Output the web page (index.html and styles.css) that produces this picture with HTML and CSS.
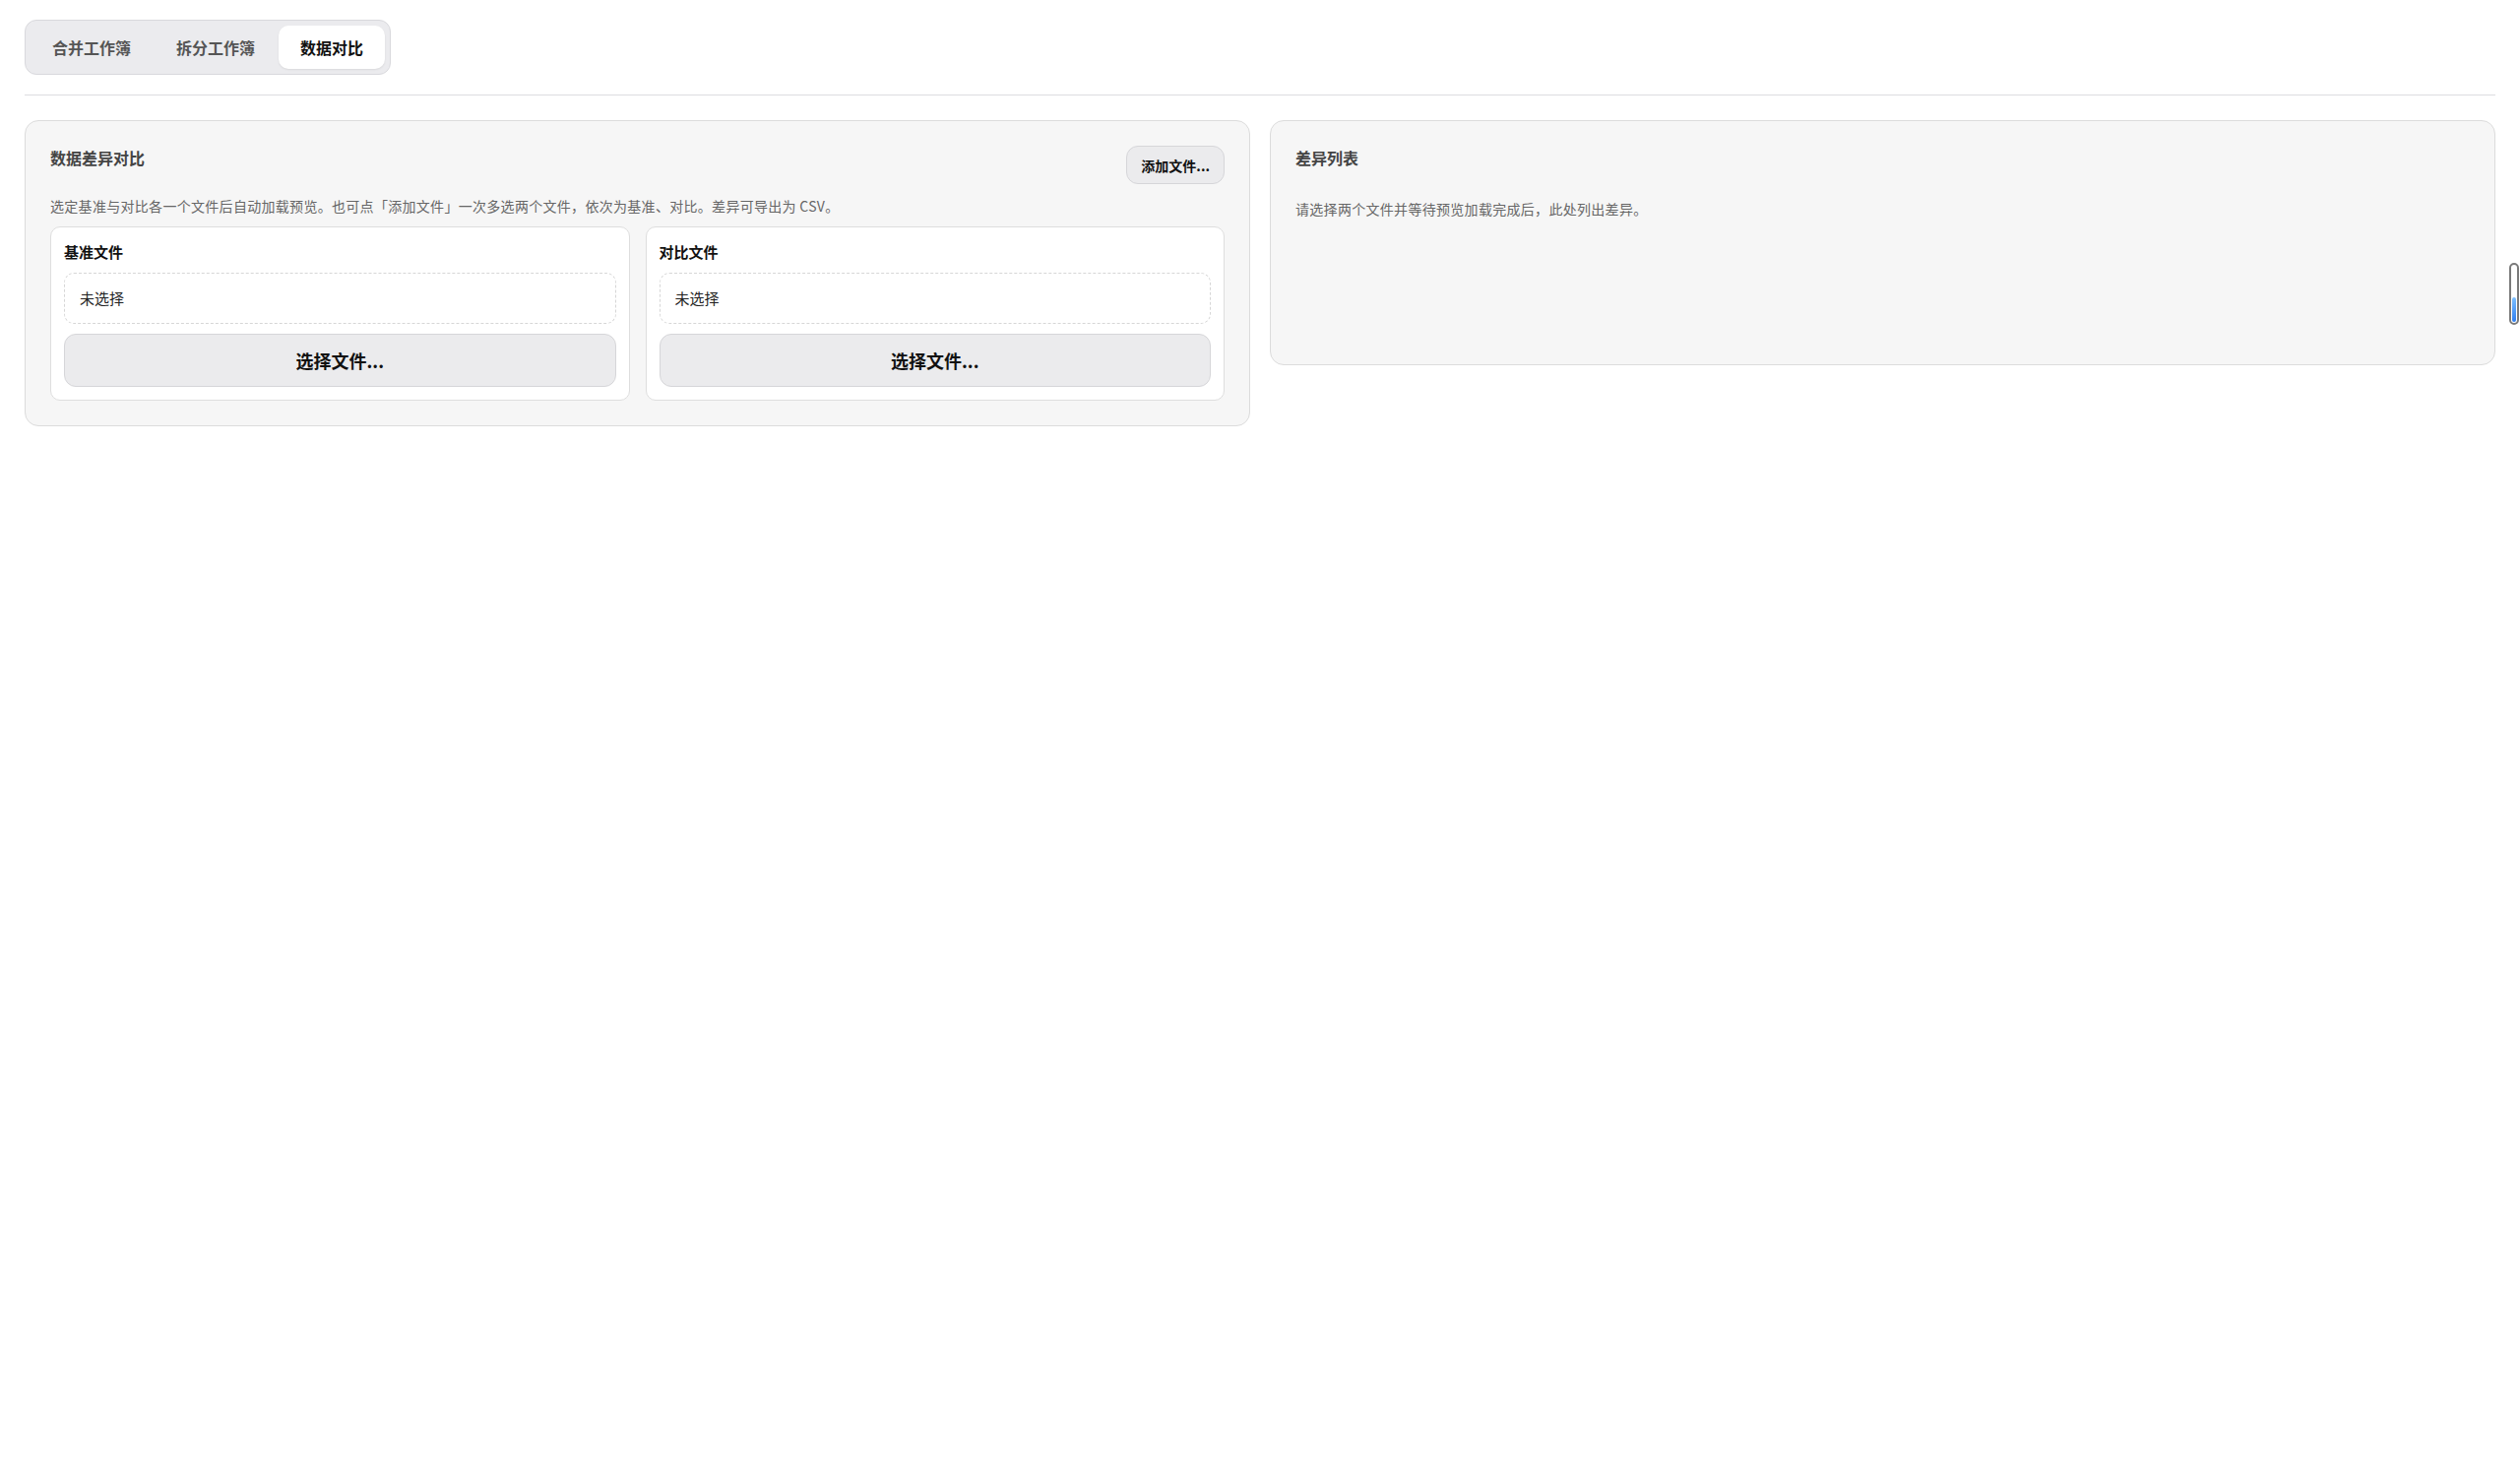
FILE: index.html
```html
<!DOCTYPE html>
<html lang="zh-CN">
<head>
    <meta charset="UTF-8">
    <meta name="viewport" content="width=device-width, initial-scale=1.0">
    <title>数据对比</title>
    <link rel="stylesheet" href="styles.css">
</head>
<body>
    <div class="app">
        <!-- 顶部功能切换 -->
        <nav class="tabs">
            <button class="tab">合并工作簿</button>
            <button class="tab">拆分工作簿</button>
            <button class="tab active">数据对比</button>
        </nav>

        <hr class="divider">

        <main class="compare">
            <!-- 左侧：选择文件 -->
            <section class="panel">
                <div class="panel-head">
                    <h2 class="panel-title">数据差异对比</h2>
                    <button class="btn btn-small" id="addFiles">添加文件...</button>
                </div>
                <p class="hint hint-top">选定基准与对比各一个文件后自动加载预览。也可点「添加文件」一次多选两个文件，依次为基准、对比。差异可导出为 CSV。</p>

                <div class="file-grid">
                    <div class="file-card">
                        <div class="file-label">基准文件</div>
                        <div class="file-name">未选择</div>
                        <button class="btn btn-pick">选择文件...</button>
                    </div>
                    <div class="file-card">
                        <div class="file-label">对比文件</div>
                        <div class="file-name">未选择</div>
                        <button class="btn btn-pick">选择文件...</button>
                    </div>
                </div>
            </section>

            <!-- 右侧：差异结果 -->
            <section class="panel">
                <div class="panel-head">
                    <h2 class="panel-title">差异列表</h2>
                </div>
                <div class="diff-list">
                    <p class="hint">请选择两个文件并等待预览加载完成后，此处列出差异。</p>
                </div>
            </section>
        </main>
    </div>

    <div class="scroll-pill"><span></span></div>
</body>
</html>
```

FILE: styles.css
```css
* {
    margin: 0;
    padding: 0;
    box-sizing: border-box;
}

body {
    font-family: "Noto Sans CJK SC", "Noto Sans", sans-serif;
    background: #fff;
    color: #111;
}

.app {
    padding: 20px 25px;
}

/* 顶部标签 */
.tabs {
    display: inline-flex;
    gap: 2px;
    padding: 5px;
    background: #ebebee;
    border: 1px solid #d9d9dd;
    border-radius: 12px;
}

.tab {
    height: 44px;
    padding: 0 22px;
    border: none;
    border-radius: 10px;
    background: transparent;
    font-family: inherit;
    font-size: 16px;
    font-weight: 600;
    line-height: 44px;
    color: #555;
    cursor: pointer;
}

.tab.active {
    background: #fff;
    color: #111;
    box-shadow: 0 1px 2px rgba(0,0,0,0.08);
}

.divider {
    border: none;
    border-top: 1px solid #dcdce0;
    margin: 20px 0 25px;
}

/* 主体两栏 */
.compare {
    display: grid;
    grid-template-columns: 1fr 1fr;
    gap: 20px;
    align-items: start;
}

.panel {
    background: #f6f6f6;
    border: 1px solid #dcdcdc;
    border-radius: 14px;
    padding: 25px;
}

.panel-head {
    display: flex;
    justify-content: space-between;
    align-items: flex-start;
}

.panel-title {
    font-size: 16px;
    font-weight: 600;
    line-height: 24px;
    color: #444;
}

.hint {
    font-size: 14px;
    line-height: 20px;
    letter-spacing: 0.3px;
    color: #666;
}

.hint-top {
    margin: 12px 0 11px;
}

.btn {
    font-family: inherit;
    font-weight: 700;
    color: #111;
    background: #ebebed;
    border: 1px solid #d6d6d9;
    border-radius: 12px;
    cursor: pointer;
}

.btn-small {
    height: 39px;
    padding: 0 14px;
    font-size: 14px;
}

/* 文件卡片 */
.file-grid {
    display: grid;
    grid-template-columns: 1fr 1fr;
    gap: 16px;
}

.file-card {
    background: #fff;
    border: 1px solid #dedede;
    border-radius: 10px;
    padding: 13px;
}

.file-label {
    font-size: 15px;
    font-weight: 700;
    line-height: 24px;
    color: #111;
}

.file-name {
    margin-top: 9px;
    height: 52px;
    padding: 0 15px;
    border: 1px dashed #d6d6d6;
    border-radius: 10px;
    font-size: 15px;
    line-height: 50px;
    color: #222;
}

.btn-pick {
    display: block;
    width: 100%;
    height: 54px;
    margin-top: 10px;
    font-size: 18px;
}

.diff-list {
    margin-top: 30px;
    min-height: 143px;
}

/* 右侧滚动位置指示 */
.scroll-pill {
    position: fixed;
    top: 267px;
    right: 1px;
    width: 10px;
    height: 63px;
    border: 2px solid #7a7a7a;
    border-radius: 6px;
    background: #fff;
}

.scroll-pill span {
    position: absolute;
    left: 1px;
    bottom: 1px;
    width: 4px;
    height: 25px;
    border-radius: 2px;
    background: linear-gradient(#7cc0ff, #2f7ff0);
}
```
